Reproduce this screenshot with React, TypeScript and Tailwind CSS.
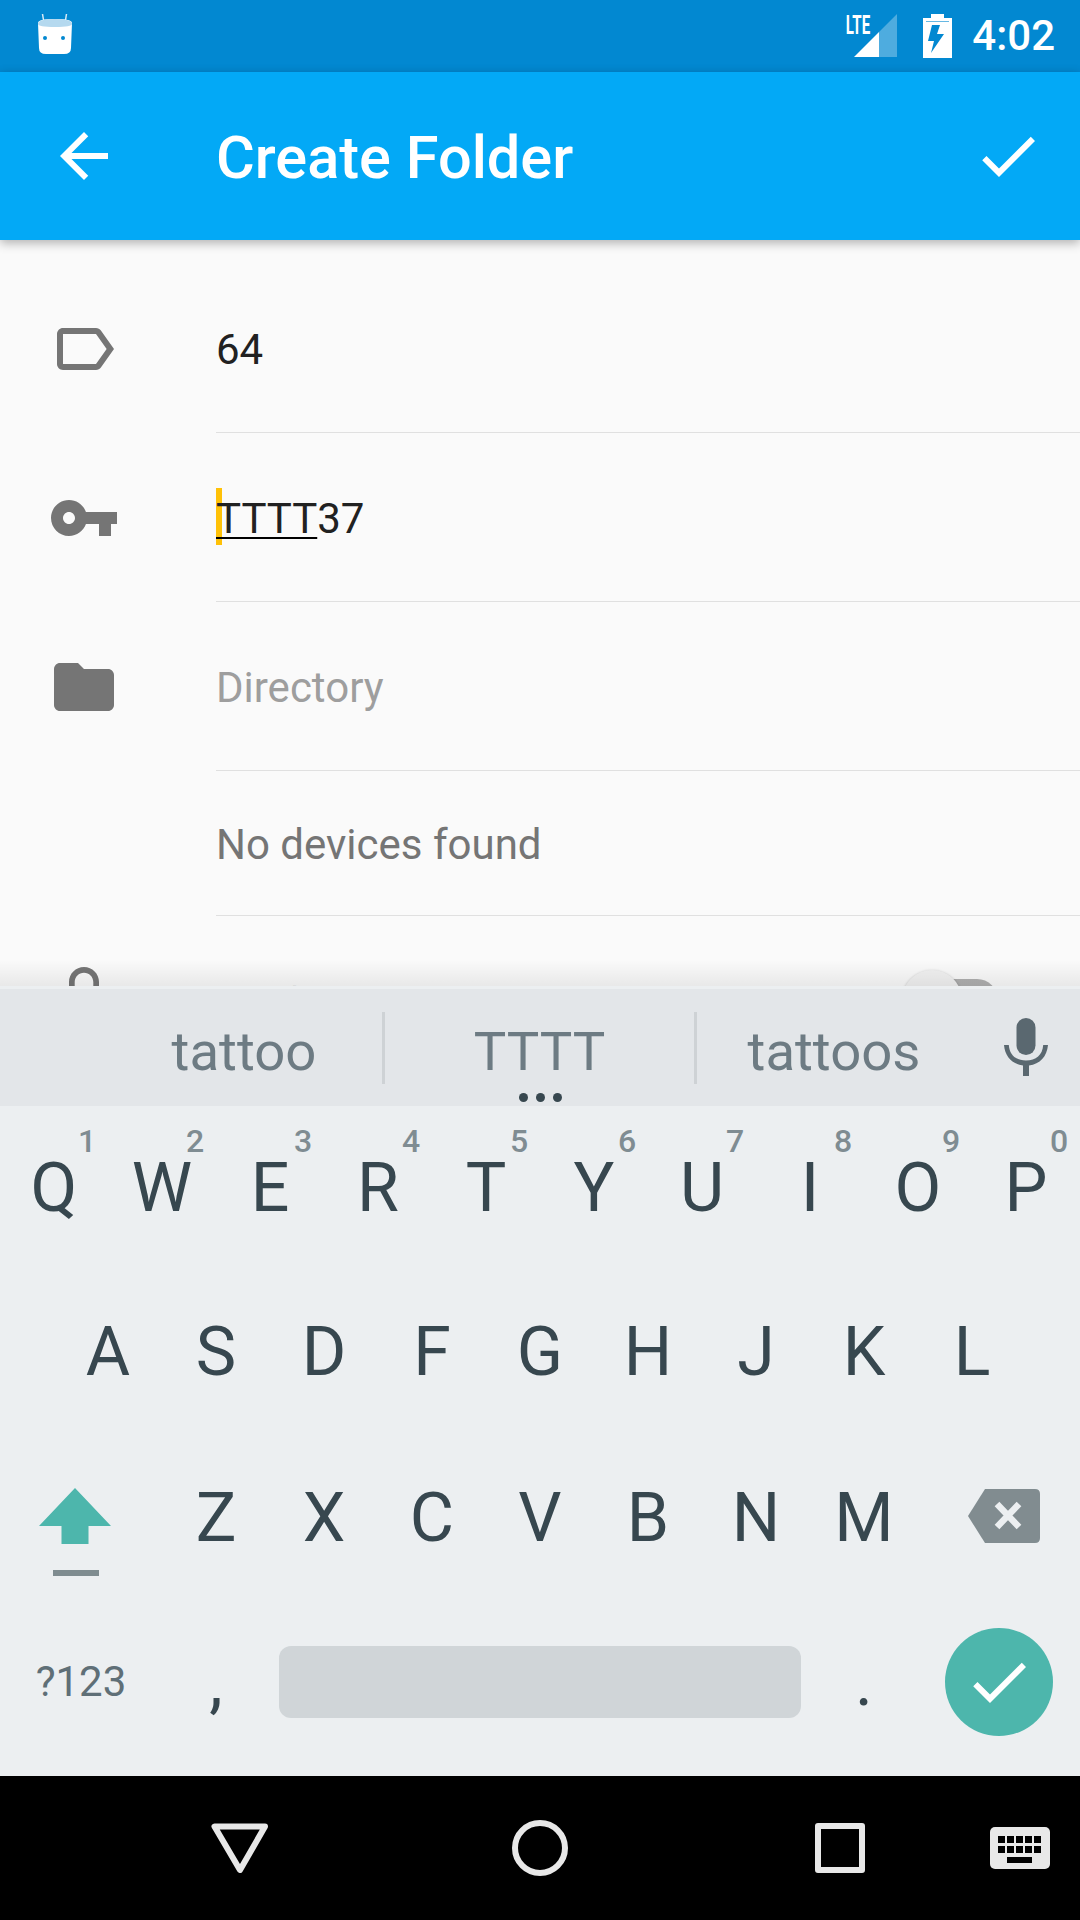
const row1 = ["Q", "W", "E", "R", "T", "Y", "U", "I", "O", "P"];
const hints = ["1", "2", "3", "4", "5", "6", "7", "8", "9", "0"];
const row2 = ["A", "S", "D", "F", "G", "H", "J", "K", "L"];
const row3 = ["Z", "X", "C", "V", "B", "N", "M"];

function Icon({ d, className }: { d: string; className?: string }) {
  return (
    <svg viewBox="0 0 24 24" className={className} fill="currentColor">
      <path d={d} />
    </svg>
  );
}

function StatusBar() {
  return (
    <div className="flex h-[72px] shrink-0 items-center bg-[#0288D1] pl-[38px] pr-[25px] text-white">
      <svg viewBox="0 0 34 42" className="mt-[-2px] h-[42px] w-[34px]">
        <path d="M6 9 L4.500 0 M27 9 L28.500 0" stroke="#d6e9f5" strokeWidth="1.500" />
        <path d="M0 9 Q0 5 17 5 Q34 5 34 9 L33 34 Q33 40 26 40 L8 40 Q1 40 1 34 Z" fill="#fff" />
        <path d="M0 10 Q0 5 17 5 Q34 5 34 10 Q34 13 17 13 Q0 13 0 10 Z" fill="#b5d9ef" />
        <circle cx="7" cy="24" r="2" fill="#0288D1" />
        <circle cx="25" cy="24" r="2" fill="#0288D1" />
      </svg>
      <div className="ml-auto flex items-center">
        <div className="relative h-[44px] w-[53px]">
          <span className="absolute left-[-8px] top-[-2px] origin-center scale-x-[0.58] text-[26px] font-bold leading-[26px]">
            LTE
          </span>
          <svg viewBox="0 0 43 43" className="absolute left-[9px] top-0 h-[43px] w-[43px]">
            <path d="M25 18 L43 0 V43 H25 Z" fill="#fff" fillOpacity="0.3" />
            <path d="M0 43 L25 18 V43 Z" fill="#fff" />
          </svg>
        </div>
        <svg viewBox="0 0 29 44" className="ml-[25px] h-[44px] w-[29px]">
          <path d="M8 0 H21 V4 H29 V44 H0 V4 H8 Z" fill="#fff" />
          <path d="M3 7 H26 V8 H3 Z" fill="#0288D1" fillOpacity="0.6" />
          <path d="M17 11 H9 L5 27 H11 L8 39 L21 20 H14 Z" fill="#0288D1" />
        </svg>
        <span className="ml-[20px] text-[42px] font-medium leading-none">4:02</span>
      </div>
    </div>
  );
}

function AppBar() {
  return (
    <div className="relative z-10 flex h-[168px] shrink-0 items-center bg-[#03A9F6] text-white shadow-[0_3px_10px_rgba(0,0,0,0.3)]">
      <Icon
        d="M20 11H7.830l5.590-5.590L12 4l-8 8 8 8 1.410-1.410L7.830 13H20v-2z"
        className="ml-[48px] h-[72px] w-[72px]"
      />
      <span className="ml-[96px] mt-[6px] text-[59.5px] font-medium leading-none">Create Folder</span>
      <Icon
        d="M9 16.170L4.830 12l-1.420 1.410L9 19 21 7l-1.410-1.410z"
        className="ml-auto mr-[36px] h-[72px] w-[72px]"
      />
    </div>
  );
}

function FormRow({
  icon,
  height = "h-[169px]",
  children,
}: {
  icon?: string;
  height?: string;
  children: React.ReactNode;
}) {
  return (
    <div className={`flex shrink-0 ${height}`}>
      <div className="flex w-[216px] shrink-0 items-center pl-[48px] text-[#757575]">
        {icon && <Icon d={icon} className="h-[72px] w-[72px]" />}
      </div>
      <div className="flex flex-1 items-center border-b border-[#e0e0e0] pt-[4px] text-[42px] leading-none">
        {children}
      </div>
    </div>
  );
}

function Form() {
  return (
    <div className="relative min-h-0 flex-1 overflow-hidden bg-[#FAFAFA] pt-[24px]">
      <FormRow
        icon="M17.630 5.840C17.270 5.330 16.670 5 16 5L5 5.010C3.900 5.010 3 5.900 3 7v10c0 1.100.9 1.990 2 1.990L16 19c.67 0 1.270-.33 1.630-.84L22 12l-4.370-6.160zM16 17H5V7h11l3.550 5L16 17z"
      >
        <span className="text-[#212121]">64</span>
      </FormRow>
      <FormRow
        icon="M12.650 10C11.830 7.670 9.610 6 7 6c-3.310 0-6 2.690-6 6s2.690 6 6 6c2.610 0 4.830-1.670 5.650-4H17v4h4v-4h2v-4H12.650zM7 14c-1.100 0-2-.9-2-2s.9-2 2-2 2 .9 2 2-.9 2-2 2z"
      >
        <span className="relative text-[#212121]">
          <span className="absolute left-0 top-[-10px] h-[57px] w-[6px] bg-[#FFC107]" />
          <span className="relative">
            <span className="underline decoration-black decoration-2 underline-offset-[4px]">TTTT</span>37
          </span>
        </span>
      </FormRow>
      <FormRow
        icon="M10 4H4c-1.100 0-1.990.9-1.990 2L2 18c0 1.100.9 2 2 2h16c1.100 0 2-.9 2-2V8c0-1.100-.9-2-2-2h-8l-2-2z"
      >
        <span className="text-[#9e9e9e]">Directory</span>
      </FormRow>
      <FormRow height="h-[145px]">
        <span className="text-[#757575]">No devices found</span>
      </FormRow>
      <div className="flex h-[168px]">
        <div className="flex w-[216px] shrink-0 items-center pl-[48px] text-[#757575]">
          <Icon
            d="M12 17c1.100 0 2-.9 2-2s-.9-2-2-2-2 .9-2 2 .9 2 2 2zm6-9h-1V6c0-2.760-2.240-5-5-5S7 3.240 7 6v2H6c-1.100 0-2 .9-2 2v10c0 1.100.9 2 2 2h12c1.100 0 2-.9 2-2V10c0-1.100-.9-2-2-2zM8.900 6c0-1.710 1.390-3.100 3.100-3.100s3.100 1.390 3.100 3.100v2H8.900V6zM18 20H6V10h12v10z"
            className="h-[72px] w-[72px]"
          />
        </div>
        <div className="flex flex-1 items-center pt-[7px] text-[42px] leading-none text-[#212121]">Public</div>
        <div className="relative mr-[82px] flex h-[60px] w-[96px] items-center self-center">
          <div className="h-[42px] w-full rounded-full bg-[#b0b0b0]" />
          <div className="absolute left-0 top-0 h-[60px] w-[60px] rounded-full bg-[#f1f1f1] shadow-[0_1px_3px_rgba(0,0,0,0.3)]" />
        </div>
      </div>
      <div className="absolute inset-x-0 bottom-0 h-[26px] bg-gradient-to-b from-transparent to-[rgba(0,0,0,0.07)]" />
    </div>
  );
}

function Suggestions() {
  return (
    <div className="flex h-[123px] shrink-0 flex-col border-y-[3px] border-[#ECEFF1] bg-[#E3E6E9] text-[54.5px] leading-none text-[#6d7b83]">
      <div className="flex h-[95px] items-end pl-[106px]">
        <div className="flex h-[72px] w-[279px] items-center justify-center border-r-[3px] border-[#ced2d5]">
          <span className="mt-[6px]">tattoo</span>
        </div>
        <div className="flex h-[72px] w-[312px] items-center justify-center border-r-[3px] border-[#ced2d5]">
          <span className="mt-[6px]">TTTT</span>
        </div>
        <div className="flex h-[72px] w-[274px] items-center justify-center">
          <span className="mt-[6px]">tattoos</span>
        </div>
        <div className="flex h-[72px] flex-1 items-center justify-center text-[#5a6870]">
          <svg viewBox="0 0 44 58" className="mt-[-2px] h-[58px] w-[44px]" fill="currentColor">
            <rect x="12.500" y="0" width="19" height="37" rx="9.500" />
            <path d="M0 27 H4.800 C5.500 37 12 42.500 22 42.500 C32 42.500 38.500 37 39.200 27 H44 C43 38.500 36 46 25 47.500 V58 H19 V47.500 C8 46 1 38.500 0 27 Z" />
          </svg>
        </div>
      </div>
      <div className="mt-[5px] flex flex-1 items-center justify-center gap-[8px]">
        <span className="h-[9px] w-[9px] rounded-full bg-[#37474F]" />
        <span className="h-[9px] w-[9px] rounded-full bg-[#37474F]" />
        <span className="h-[9px] w-[9px] rounded-full bg-[#37474F]" />
      </div>
    </div>
  );
}

function Keyboard() {
  return (
    <div className="flex h-[667px] shrink-0 flex-col bg-[#ECEFF1] text-[68px] leading-none text-[#37474F]">
      <div className="flex h-[158px] shrink-0 pb-[1px]">
        {row1.map((k, i) => (
          <div key={k} className="relative flex w-[108px] items-center justify-center">
            {k}
            <span className="absolute left-[78px] top-[16px] w-[18px] text-center text-[32px] font-medium leading-none text-[#7f8c92]">
              {hints[i]}
            </span>
          </div>
        ))}
      </div>
      <div className="flex h-[166px] shrink-0 pl-[54px]">
        {row2.map((k) => (
          <div key={k} className="flex w-[108px] items-center justify-center pt-[4px]">
            {k}
          </div>
        ))}
      </div>
      <div className="flex h-[166px] shrink-0">
        <div className="flex w-[162px] flex-col items-start pl-[39px] pt-[55px]">
          <svg viewBox="0 0 72 56" className="h-[56px] w-[72px]">
            <path d="M36 0 L72 38 H49.500 V56 H22.500 V38 H0 Z" fill="#4DB6AC" />
          </svg>
          <div className="ml-[14px] mt-[26px] h-[6px] w-[46px] bg-[#7f8c90]" />
        </div>
        {row3.map((k) => (
          <div key={k} className="flex w-[108px] items-center justify-center pt-[4px]">
            {k}
          </div>
        ))}
        <div className="flex flex-1 items-center pl-[50px]">
          <svg viewBox="0 0 72 54" className="h-[54px] w-[72px]">
            <path
              d="M17 0 H67 Q72 0 72 5 V49 Q72 54 67 54 H17 L0 27 Z"
              fill="#818c90"
            />
            <path d="M29 15 L51 38 M51 15 L29 38" stroke="#ECEFF1" strokeWidth="6.500" fill="none" />
          </svg>
        </div>
      </div>
      <div className="flex h-[166px] shrink-0 items-center">
        <div className="flex w-[162px] justify-center text-[42px] text-[#5f6f77]">?123</div>
        <div className="flex w-[108px] justify-center">,</div>
        <div className="ml-[9px] h-[72px] w-[522px] rounded-[12px] bg-[#D0D5D8]" />
        <div className="ml-[9px] flex w-[108px] justify-center">.</div>
        <div className="flex flex-1 justify-center">
          <div className="flex h-[108px] w-[108px] items-center justify-center rounded-full bg-[#4DB6AC] text-white">
            <Icon
              d="M9 16.170L4.830 12l-1.420 1.410L9 19 21 7l-1.410-1.410z"
              className="h-[72px] w-[72px]"
            />
          </div>
        </div>
      </div>
    </div>
  );
}

function NavBar() {
  return (
    <div className="flex h-[144px] shrink-0 items-center gap-[180px] bg-black pl-[180px] text-[#e8e8e8]">
      <div className="flex w-[120px] justify-center">
        <svg viewBox="0 0 58 50" className="h-[50px] w-[58px]" fill="none" stroke="currentColor" strokeWidth="6" strokeLinejoin="round">
          <path d="M3.500 3.500 H54 L29 47 Z" />
        </svg>
      </div>
      <div className="flex w-[120px] justify-center">
        <div className="h-[56px] w-[56px] rounded-full border-[6px] border-[#e8e8e8]" />
      </div>
      <div className="flex w-[120px] justify-center">
        <div className="h-[50px] w-[50px] rounded-[3px] border-[6px] border-[#e8e8e8]" />
      </div>
      <div className="ml-[-120px] flex w-[120px] justify-center">
        <svg viewBox="0 0 60 42" className="h-[42px] w-[60px]">
          <rect width="60" height="42" rx="5" fill="currentColor" />
          {[8, 17, 26, 35, 44].map((x) => (
            <g key={x}>
              <rect x={x} y="9" width="7" height="7" fill="#000" />
              <rect x={x} y="19" width="7" height="7" fill="#000" />
            </g>
          ))}
          <rect x="17" y="30" width="25" height="6" fill="#000" />
        </svg>
      </div>
    </div>
  );
}

export default function App() {
  return (
    <div className="flex h-[1920px] w-[1080px] flex-col overflow-hidden font-[Roboto,sans-serif]">
      <StatusBar />
      <AppBar />
      <Form />
      <Suggestions />
      <Keyboard />
      <NavBar />
    </div>
  );
}
